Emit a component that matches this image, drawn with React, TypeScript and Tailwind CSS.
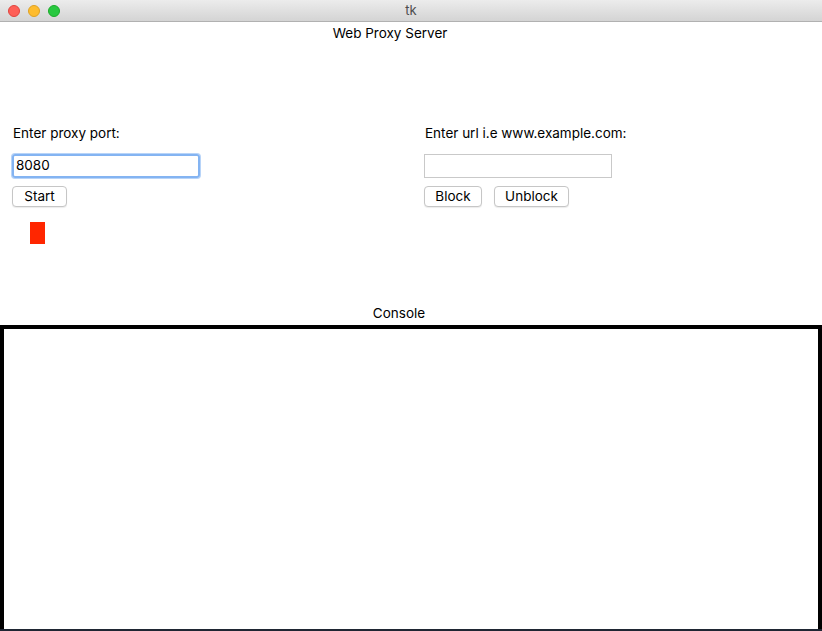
export default function App() {
  return (
    <div
      className="w-[822px] h-[631px] flex flex-col bg-white text-[13.5px] text-black overflow-hidden"
      style={{ fontFamily: 'Inter, "Liberation Sans", sans-serif' }}
    >
      {/* Title bar */}
      <div className="relative h-[22px] shrink-0 flex items-center justify-center bg-gradient-to-b from-[#ececec] to-[#d4d4d4] border-b border-[#b1b1b1]">
        <div className="absolute left-[8px] top-[5px] flex gap-[8px]">
          <span className="w-[12px] h-[12px] rounded-full bg-[#fe5f57] border border-[#e0443e]" />
          <span className="w-[12px] h-[12px] rounded-full bg-[#febc2e] border border-[#dea123]" />
          <span className="w-[12px] h-[12px] rounded-full bg-[#28c840] border border-[#1aab29]" />
        </div>
        <span className="text-[#4d4d4d] text-[13px] leading-none">tk</span>
      </div>

      {/* Heading */}
      <div className="mt-[3px] pr-[42px] h-[16px] leading-[16px] text-center">Web Proxy Server</div>

      {/* Forms */}
      <div className="mt-[84px] flex">
        <div className="w-[424px] pl-[12px] flex flex-col items-start">
          <span className="ml-[1px] h-[16px] leading-[16px]">Enter proxy port:</span>
          <div className="mt-[13px] w-[188px] h-[24px] rounded-[3px] border-2 border-[#84b4f2] shadow-[0_0_0_1px_#b8d4f8] flex items-center px-[2px] leading-none">
            8080
          </div>
          <button className="mt-[8px] w-[55px] h-[21px] rounded-[4px] border border-[#c6c6c6] bg-white shadow-[0_1px_1px_rgba(0,0,0,0.08)] leading-none">
            Start
          </button>
          <div className="mt-[15px] ml-[18px] w-[15px] h-[22px] bg-[#ff2600]" />
        </div>
        <div className="flex flex-col items-start">
          <span className="ml-[1px] h-[16px] leading-[16px]">Enter url i.e www.example.com:</span>
          <div className="mt-[13px] w-[188px] h-[24px] border border-[#c9c9c9]" />
          <div className="mt-[8px] flex gap-[12px]">
            <button className="w-[58px] h-[21px] rounded-[4px] border border-[#c6c6c6] bg-white shadow-[0_1px_1px_rgba(0,0,0,0.08)] leading-none">
              Block
            </button>
            <button className="w-[75px] h-[21px] rounded-[4px] border border-[#c6c6c6] bg-white shadow-[0_1px_1px_rgba(0,0,0,0.08)] leading-none">
              Unblock
            </button>
          </div>
        </div>
      </div>

      {/* Console */}
      <div className="mt-[61px] pr-[24px] h-[16px] leading-[16px] text-center">Console</div>
      <div className="mt-[4px] flex-1 border-[4px] border-b-0 border-black bg-white" />
      <div className="h-[2px] shrink-0 bg-[#1f2633]" />
    </div>
  );
}
